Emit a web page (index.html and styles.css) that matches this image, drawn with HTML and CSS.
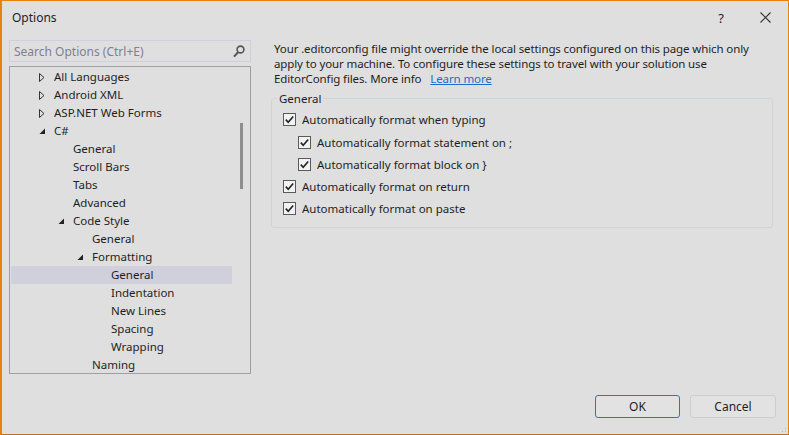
FILE: index.html
```html
<!DOCTYPE html>
<html>
<head>
<meta charset="utf-8">
<link rel="stylesheet" href="styles.css">
</head>
<body>
<div class="window">
  <div class="titlebar">
    <span class="title">Options</span>
    <span class="help">?</span>
    <span class="close"><svg width="11" height="11" viewBox="0 0 11 11"><path d="M0.5 0.5 L10.5 10.5 M10.5 0.5 L0.5 10.5" stroke="#333" stroke-width="1.1" fill="none"/></svg></span>
  </div>
  <div class="content">
    <div class="left">
      <div class="search">
        <span class="placeholder">Search Options (Ctrl+E)</span>
        <svg class="search-icon" width="12" height="13" viewBox="0 0 12 13"><circle cx="7.5" cy="4.5" r="3.4" stroke="#555" stroke-width="1.6" fill="none"/><path d="M5.3 7 L1 11.6" stroke="#555" stroke-width="2" fill="none"/></svg>
      </div>
      <div class="tree">
        <div class="rows">
          <div class="row l0"><span class="tw"><svg width="6" height="9" viewBox="0 0 6 9"><path d="M0.5 0.5 L5 4.5 L0.5 8.5 Z" fill="none" stroke="#333" stroke-width="1"/></svg></span>All Languages</div>
          <div class="row l0"><span class="tw"><svg width="6" height="9" viewBox="0 0 6 9"><path d="M0.5 0.5 L5 4.5 L0.5 8.5 Z" fill="none" stroke="#333" stroke-width="1"/></svg></span>Android XML</div>
          <div class="row l0"><span class="tw"><svg width="6" height="9" viewBox="0 0 6 9"><path d="M0.5 0.5 L5 4.5 L0.5 8.5 Z" fill="none" stroke="#333" stroke-width="1"/></svg></span>ASP.NET Web Forms</div>
          <div class="row l0"><span class="tw"><svg width="6" height="9" viewBox="0 0 6 9"><path d="M6 1.5 L6 7 L0.5 7 Z" fill="#222"/></svg></span>C#</div>
          <div class="row l1"><span class="tw"></span>General</div>
          <div class="row l1"><span class="tw"></span>Scroll Bars</div>
          <div class="row l1"><span class="tw"></span>Tabs</div>
          <div class="row l1"><span class="tw"></span>Advanced</div>
          <div class="row l1"><span class="tw"><svg width="6" height="9" viewBox="0 0 6 9"><path d="M6 1.5 L6 7 L0.5 7 Z" fill="#222"/></svg></span>Code Style</div>
          <div class="row l2"><span class="tw"></span>General</div>
          <div class="row l2"><span class="tw"><svg width="6" height="9" viewBox="0 0 6 9"><path d="M6 1.5 L6 7 L0.5 7 Z" fill="#222"/></svg></span>Formatting</div>
          <div class="row l3 selected"><span class="tw"></span>General</div>
          <div class="row l3"><span class="tw"></span>Indentation</div>
          <div class="row l3"><span class="tw"></span>New Lines</div>
          <div class="row l3"><span class="tw"></span>Spacing</div>
          <div class="row l3"><span class="tw"></span>Wrapping</div>
          <div class="row l2"><span class="tw"></span>Naming</div>
        </div>
        <div class="scrollbar"><div class="thumb"></div></div>
      </div>
    </div>
    <div class="right">
      <p class="info">Your .editorconfig file might override the local settings configured on this page which only<br>apply to your machine. To configure these settings to travel with your solution use<br>EditorConfig files. More info <a class="link" href="#">Learn more</a></p>
      <fieldset class="group">
        <legend>General</legend>
        <div class="opt first"><span class="cb"><svg width="13" height="13" viewBox="0 0 13 13"><path d="M2.8 6.6 L5.2 9.2 L10.2 3.4" stroke="#222" stroke-width="1.6" fill="none"/></svg></span>Automatically format when typing</div>
        <div class="opt sub"><span class="cb"><svg width="13" height="13" viewBox="0 0 13 13"><path d="M2.8 6.6 L5.2 9.2 L10.2 3.4" stroke="#222" stroke-width="1.6" fill="none"/></svg></span>Automatically format statement on ;</div>
        <div class="opt sub"><span class="cb"><svg width="13" height="13" viewBox="0 0 13 13"><path d="M2.8 6.6 L5.2 9.2 L10.2 3.4" stroke="#222" stroke-width="1.6" fill="none"/></svg></span>Automatically format block on }</div>
        <div class="opt"><span class="cb"><svg width="13" height="13" viewBox="0 0 13 13"><path d="M2.8 6.6 L5.2 9.2 L10.2 3.4" stroke="#222" stroke-width="1.6" fill="none"/></svg></span>Automatically format on return</div>
        <div class="opt"><span class="cb"><svg width="13" height="13" viewBox="0 0 13 13"><path d="M2.8 6.6 L5.2 9.2 L10.2 3.4" stroke="#222" stroke-width="1.6" fill="none"/></svg></span>Automatically format on paste</div>
      </fieldset>
    </div>
  </div>
  <div class="footer">
    <button class="btn primary">OK</button>
    <button class="btn">Cancel</button>
  </div>
  <div class="grip"><svg width="9" height="9" viewBox="0 0 9 9"><rect x="7" y="1" width="1" height="1" fill="#b8b8b8"/><rect x="4" y="4" width="1" height="1" fill="#b8b8b8"/><rect x="7" y="4" width="1" height="1" fill="#b8b8b8"/><rect x="1" y="7" width="1" height="1" fill="#b8b8b8"/><rect x="4" y="7" width="1" height="1" fill="#b8b8b8"/><rect x="7" y="7" width="1" height="1" fill="#b8b8b8"/></svg></div>
</div>
</body>
</html>
```

FILE: styles.css
```css
* { box-sizing: border-box; }
html, body { margin: 0; padding: 0; }
body {
  font-family: "Segoe UI", "Noto Sans", "Open Sans", sans-serif;
  font-size: 11.5px;
  color: #1e1e1e;
  background: #dfdfdf;
}
.window {
  position: relative;
  width: 789px;
  height: 435px;
  background: #dfdfdf;
  border: 1px solid #e8820e;
  border-left-width: 2px;
  border-bottom-color: #b8702a;
  display: flex;
  flex-direction: column;
  overflow: hidden;
}
.titlebar {
  height: 32px;
  flex: none;
  display: flex;
  align-items: center;
  padding-left: 10px;
  padding-top: 1px;
}
.title { flex: 1; font-size: 12px; }
.help { width: 14px; margin-right: 32px; font-size: 13px; text-align: center; }
.close { width: 11px; height: 11px; margin-right: 17px; display: flex; }
.content {
  flex: none;
  height: 345px;
  display: flex;
  padding-top: 7px;
}
.left {
  width: 242px;
  margin-left: 7px;
  display: flex;
  flex-direction: column;
  gap: 4px;
}
.search {
  height: 22px;
  border: 1px solid #cfcfe0;
  display: flex;
  align-items: center;
  padding: 0 4px 0 4px;
}
.placeholder { flex: 1; color: #808090; font-size: 12px; }
.search-icon { margin-right: 1px; margin-top: 1px; }
.tree {
  height: 308px;
  border: 1px solid #9d9dab;
  display: flex;
  padding: 1px 0 0 1px;
}
.rows { flex: 1; display: flex; flex-direction: column; }
.row {
  height: 18px;
  line-height: 18px;
  display: flex;
  align-items: center;
  white-space: nowrap;
}
.row .tw { width: 15px; height: 18px; display: flex; align-items: center; }
.l0 { padding-left: 28px; }
.l1 { padding-left: 47px; }
.l2 { padding-left: 66px; }
.l3 { padding-left: 85px; }
.selected { background: #cfd0dc; }
.scrollbar {
  width: 18px;
  padding-top: 55px;
  display: flex;
  justify-content: center;
}
.thumb { width: 3px; height: 66px; background: #8e8e8e; }
.right {
  width: 502px;
  margin-left: 20px;
  display: flex;
  flex-direction: column;
  padding-top: 1px;
}
.info {
  margin: 0 0 5px 0;
  padding-left: 3px;
  line-height: 15px;
  white-space: nowrap;
  letter-spacing: -0.12px;
}
.link { color: #1a6fc9; text-decoration: underline; margin-left: 6px; }
.group {
  margin: 0;
  padding: 2px 0 8px 0;
  border: 1px solid #cfd4dc;
  border-radius: 3px;
}
.group legend {
  margin-left: 5px;
  padding: 0 2px;
  line-height: 15px;
}
.opt {
  height: 22px;
  display: flex;
  align-items: center;
  padding-left: 11px;
  white-space: nowrap;
}
.opt.first { margin-bottom: 1px; }
.opt.sub { padding-left: 26px; }
.cb {
  width: 13px;
  height: 13px;
  border: 1px solid #5a5a5a;
  background: #f2f2f2;
  margin-right: 6px;
  display: flex;
  align-items: center;
  justify-content: center;
}
.cb svg { flex: none; }
.footer {
  display: flex;
  justify-content: flex-end;
  gap: 10px;
  padding-top: 17px;
  padding-right: 12px;
}
.btn {
  width: 86px;
  height: 23px;
  font-family: inherit;
  font-size: 12px;
  color: #1e1e1e;
  background: #e2e2e2;
  border: 1px solid #cdcdcd;
  border-radius: 3px;
  padding: 0;
}
.btn.primary {
  width: 85px;
  border: 1.5px solid #1a7ad4;
}
.grip { position: absolute; right: 1px; bottom: 1px; width: 9px; height: 9px; }
```
